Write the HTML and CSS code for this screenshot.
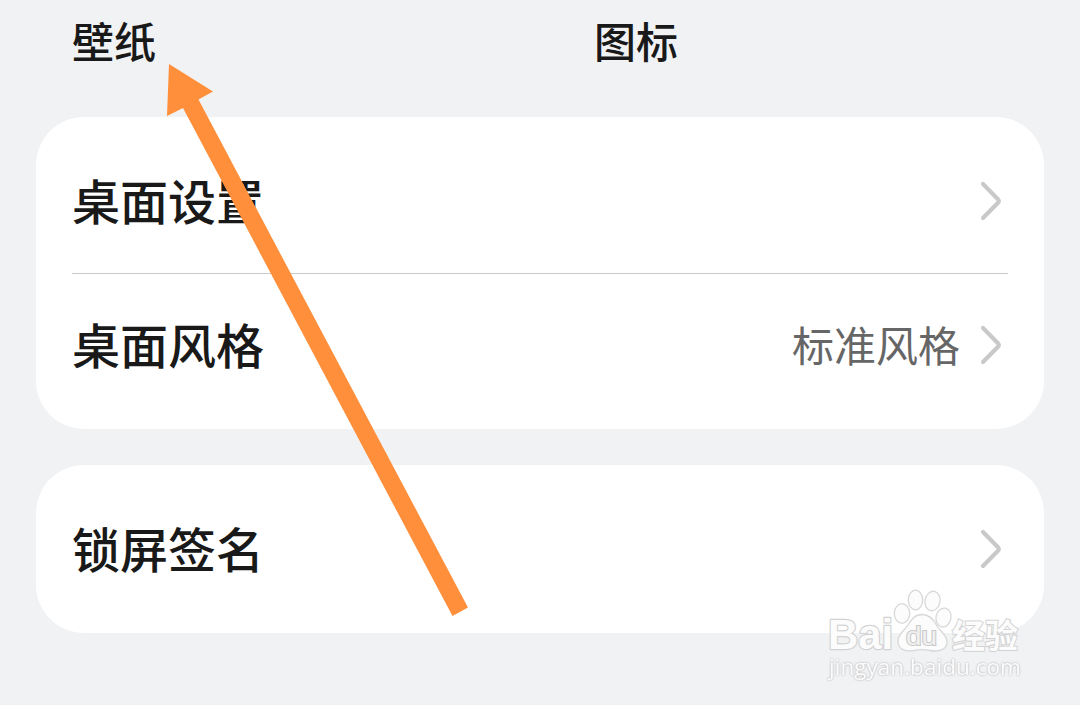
FILE: index.html
```
<!DOCTYPE html>
<html lang="zh-CN">
<head>
    <meta charset="UTF-8">
    <title>桌面和壁纸</title>
    <link rel="stylesheet" href="styles.css">
</head>
<body>
    <header class="tabs">
        <span>壁纸</span>
        <span>图标</span>
    </header>
    <main>
        <section class="card">
            <div class="row">
                <span class="label">桌面设置</span>
                <svg class="chevron" width="24" height="44" viewBox="0 0 24 44"><path d="M4 5 L19 20.3 Q20.500 22 19 23.700 L4 39"/></svg>
            </div>
            <div class="row">
                <span class="label">桌面风格</span>
                <span class="value">标准风格</span>
                <svg class="chevron" width="24" height="44" viewBox="0 0 24 44"><path d="M4 5 L19 20.3 Q20.500 22 19 23.700 L4 39"/></svg>
            </div>
        </section>
        <section class="card">
            <div class="row">
                <span class="label">锁屏签名</span>
                <svg class="chevron" width="24" height="44" viewBox="0 0 24 44"><path d="M4 5 L19 20.3 Q20.500 22 19 23.700 L4 39"/></svg>
            </div>
        </section>
    </main>

    <svg class="arrow" width="320" height="570" viewBox="160 55 320 570">
        <polygon points="169,64 213,91.5 198.500,99.500 468,607.500 452.500,616 183,108 167,116"/>
    </svg>

    <svg class="watermark" width="230" height="110" viewBox="810 580 230 110">
        <g class="outline">
            <ellipse cx="902" cy="613.500" rx="7.700" ry="9.800"/>
            <ellipse cx="915.500" cy="600" rx="7.200" ry="9.800"/>
            <ellipse cx="932.500" cy="601" rx="7.500" ry="9.800" transform="rotate(12 932.5 601)"/>
            <ellipse cx="943.500" cy="617.500" rx="7.500" ry="9.500" transform="rotate(12 943.5 617.5)"/>
            <path d="M922 614.500 C930 614.500 934 620 937 626 C941 632 947 635 947 642 C947 650 938 652 930 650.500 C925 649.500 919 649.500 914 650.500 C905 652 898 649 898 641 C898 634 904 631 908 625 C912 619 915 614.500 922 614.500 Z"/>
        </g>
        <text class="brand" x="828" y="649" textLength="65" lengthAdjust="spacingAndGlyphs">Bai</text>
        <text class="du" x="906" y="644.500" textLength="31" lengthAdjust="spacingAndGlyphs">du</text>
        <text class="jy" x="952" y="647.500" textLength="66" lengthAdjust="spacingAndGlyphs">经验</text>
        <text class="url" x="829" y="675" textLength="192" lengthAdjust="spacingAndGlyphs">jingyan.baidu.com</text>
    </svg>
</body>
</html>
```

FILE: styles.css
```
body { margin: 0; height: 705px; overflow: hidden; position: relative; background-color: #f1f2f4; color: #191919; font-family: "Noto Sans CJK SC", sans-serif; }
.tabs { display: grid; grid-template-columns: 522px 1fr; height: 117px; padding: 9px 72px 0; box-sizing: border-box; font-size: 42px; line-height: 62px; font-weight: 500; }
main { display: flex; flex-direction: column; gap: 36px; padding: 0 36px; }
.card { background-color: white; border-radius: 48px; padding: 12px 36px; }
.row { display: flex; align-items: center; height: 144px; box-sizing: border-box; }
.row + .row { border-top: 1px solid #c9c9c9; padding-bottom: 2px; }
.label { flex: 1; font-size: 48px; line-height: 70px; font-weight: 500; padding-bottom: 4px; }
.value { font-size: 42px; line-height: 62px; color: #666; margin-right: 19px; padding-bottom: 2px; }
.chevron { margin-right: 5px; fill: none; stroke: #c9c9c9; stroke-width: 4.200; stroke-linecap: round; stroke-linejoin: round; }
.arrow { position: absolute; left: 160px; top: 55px; fill: #ff8f3b; }
.watermark { position: absolute; left: 810px; top: 580px; }
.outline { fill: #fcfcfc; stroke: #d8d8d8; stroke-width: 1.300; }
.watermark text { fill: #fcfcfc; stroke: #d2d2d2; stroke-width: 2; paint-order: stroke; }
.watermark .brand { font: bold 43px "Liberation Sans", sans-serif; stroke-width: 2.400; stroke-linejoin: round; }
.watermark .du { font: 25px "Liberation Sans", sans-serif; fill: #f1f1f1; stroke: #c9c9c9; }
.watermark .jy { font: bold 33px "Noto Sans CJK SC", sans-serif; }
.watermark .url { font: 22px "Open Sans", sans-serif; stroke: none; filter: drop-shadow(0 0 0.900px #aaa); }
```
